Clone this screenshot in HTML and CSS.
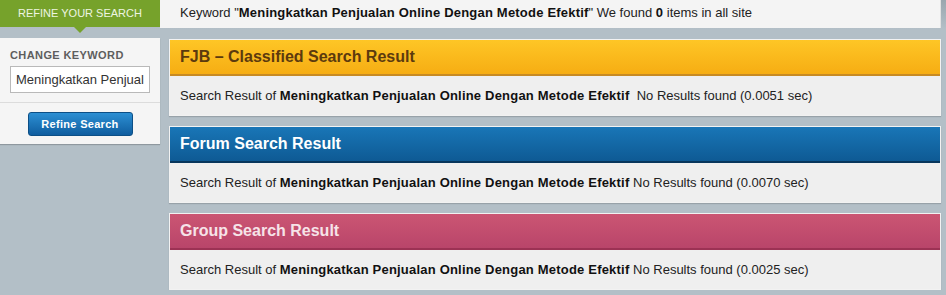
FILE: index.html
```html
<!DOCTYPE html>
<html lang="en">
<head>
<meta charset="UTF-8">
<title>Search Result</title>
<link rel="stylesheet" href="styles.css">
</head>
<body>
<div class="topbar">
    <div class="tab">Refine your search</div>
    <div class="summary">Keyword "<b>Meningkatkan Penjualan Online Dengan Metode Efektif</b>" We found <b>0</b> items in all site</div>
</div>

<div class="main">
    <div class="sidebar">
        <div class="side-top">
            <div class="side-label">Change Keyword</div>
            <input type="text" class="keyword" value="Meningkatkan Penjualan Online Dengan Metode Efektif">
        </div>
        <div class="side-bottom">
            <button class="refine-btn">Refine Search</button>
        </div>
    </div>

    <div class="results">
        <div class="panel">
            <div class="panel-head fjb">FJB – Classified Search Result</div>
            <div class="panel-body">Search Result of <b>Meningkatkan Penjualan Online Dengan Metode Efektif</b>&nbsp; No Results found (0.0051 sec)</div>
        </div>
        <div class="panel">
            <div class="panel-head forum">Forum Search Result</div>
            <div class="panel-body">Search Result of <b>Meningkatkan Penjualan Online Dengan Metode Efektif</b> No Results found (0.0070 sec)</div>
        </div>
        <div class="panel">
            <div class="panel-head group">Group Search Result</div>
            <div class="panel-body">Search Result of <b>Meningkatkan Penjualan Online Dengan Metode Efektif</b> No Results found (0.0025 sec)</div>
        </div>
    </div>
</div>
</body>
</html>
```

FILE: styles.css
```css
body {
    margin: 0;
    font-family: "Liberation Sans", Arial, sans-serif;
    font-size: 13px;
    color: #222;
    background: #b3bfc7;
}
b {
    color: #111;
    letter-spacing: 0.2px;
}
.topbar {
    display: flex;
    height: 29px;
    background: linear-gradient(to bottom, #9aa6ae, #b3bfc7);
}
.tab {
    position: relative;
    width: 160px;
    height: 27px;
    line-height: 26px;
    background: #76a22b;
    color: #eef5e2;
    font-size: 11px;
    text-transform: uppercase;
    text-align: center;
}
.tab:after {
    content: '';
    position: absolute;
    left: 74px;
    top: 27px;
    border-left: 6px solid transparent;
    border-right: 6px solid transparent;
    border-top: 6px solid #76a22b;
}
.summary {
    width: 760px;
    height: 28px;
    line-height: 26px;
    padding-left: 20px;
    background: #f4f4f4;
    border-right: 1px solid #e2e2e2;
}
.main {
    display: flex;
    align-items: flex-start;
    padding-top: 9px;
}
.sidebar {
    width: 160px;
    background: #f5f5f5;
    box-shadow: 0 1px 1px rgba(0, 0, 0, 0.2);
}
.side-top {
    padding: 11px 10px 9px;
    border-bottom: 1px solid #dcdcdc;
}
.side-label {
    font-size: 11px;
    font-weight: bold;
    color: #5e5e5e;
    letter-spacing: 0.4px;
    text-transform: uppercase;
    margin-bottom: 5px;
}
.keyword {
    box-sizing: border-box;
    width: 140px;
    height: 27px;
    padding: 0 5px;
    border: 1px solid #b9b9b9;
    background: #fff;
    font-family: "Liberation Sans", Arial, sans-serif;
    font-size: 13px;
    color: #333;
}
.side-bottom {
    padding: 9px 0 8px;
    text-align: center;
}
.refine-btn {
    width: 105px;
    height: 24px;
    border: 1px solid #0c4f86;
    border-radius: 3px;
    background: linear-gradient(to bottom, #2c8fd3, #0f5d9f);
    color: #fff;
    font-family: "Liberation Sans", Arial, sans-serif;
    font-size: 11px;
    font-weight: bold;
    letter-spacing: 0.3px;
    cursor: pointer;
}
.results {
    margin-left: 9px;
    margin-top: 1px;
    width: 772px;
    display: flex;
    flex-direction: column;
    gap: 10px;
}
.panel {
    border: 1px solid #f2f2f2;
    box-shadow: 0 1px 1px rgba(0, 0, 0, 0.15);
}
.panel-head {
    height: 34px;
    line-height: 34px;
    padding-left: 10px;
    font-size: 16px;
    font-weight: bold;
}
.fjb {
    background: linear-gradient(to bottom, #fec626, #f6ad13);
    border-bottom: 2px solid #c78a23;
    color: #5c3a0e;
}
.forum {
    background: linear-gradient(to bottom, #1976b7, #0e5a94);
    border-bottom: 2px solid #08365c;
    color: #fff;
}
.group {
    background: linear-gradient(to bottom, #cb5673, #b9456a);
    border-bottom: 2px solid #9c3254;
    color: #f6e3e8;
}
.panel-body {
    height: 39px;
    line-height: 39px;
    padding-left: 10px;
    background: #efefef;
}
```
